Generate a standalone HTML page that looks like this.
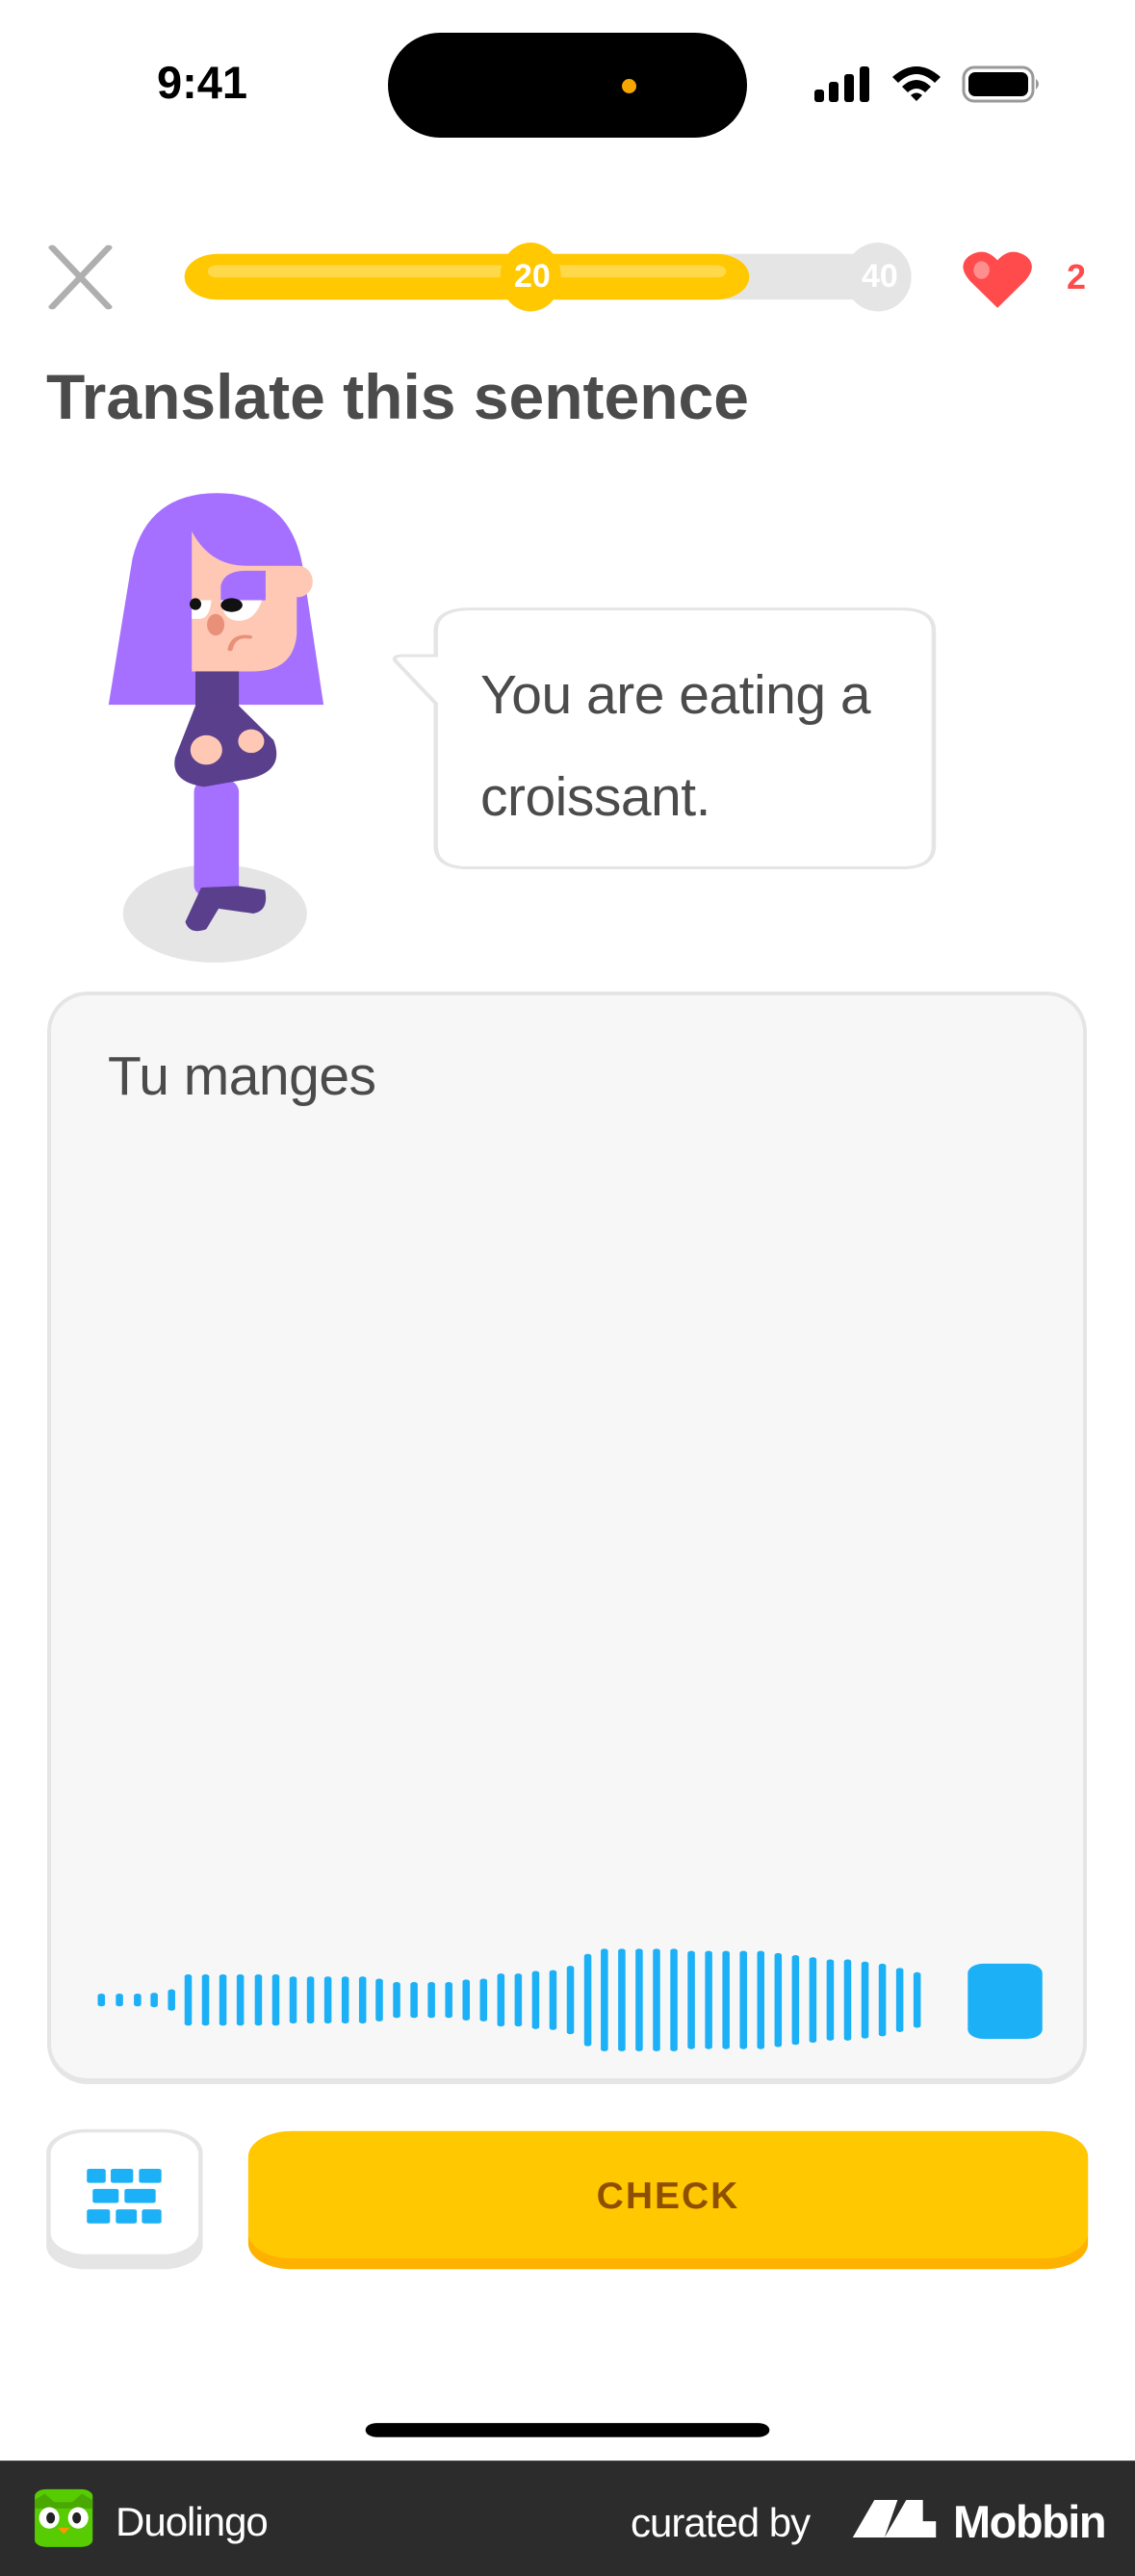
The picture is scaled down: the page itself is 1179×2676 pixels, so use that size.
<!DOCTYPE html>
<html><head><meta charset="utf-8">
<style>
html,body{margin:0;padding:0;}
body{width:1179px;height:2676px;position:relative;background:#fff;overflow:hidden;font-family:"Liberation Sans",sans-serif;}
.a{position:absolute;}
.t{white-space:nowrap;line-height:1;}
</style></head><body>

<div class="a t" style="left:163px;top:62px;font-size:47px;font-weight:bold;color:#000;">9:41</div>
<div class="a" style="left:403px;top:34px;width:373px;height:109px;border-radius:55px;background:#000;"></div>
<div class="a" style="left:646px;top:82px;width:15px;height:15px;border-radius:50%;background:#f7a600;"></div>
<svg class="a" style="left:840px;top:60px" width="250" height="55" viewBox="840 60 250 55">
 <rect x="846" y="93" width="10" height="13" rx="3"/>
 <rect x="861" y="85" width="10" height="21" rx="3"/>
 <rect x="877" y="77" width="10" height="29" rx="3"/>
 <rect x="893" y="69" width="10" height="37" rx="3"/>
 <path d="M927 80 Q952 58 977 80 L971 86 Q952 68 933 86 Z"/>
 <path d="M937 90 Q952 76 967 90 L961 96 Q952 88 943 96 Z"/>
 <path d="M946 99 Q952 94 958 99 L952 105 Z"/>
 <rect x="1001" y="70" width="72" height="35" rx="11" fill="none" stroke="#999" stroke-width="3"/>
 <rect x="1006" y="75" width="62" height="25" rx="7"/>
 <path d="M1076 82 Q1082 87 1076 93 Z" fill="#999"/>
</svg>

<svg class="a" style="left:0;top:200px" width="1179" height="800" viewBox="0 0 1568 1568" preserveAspectRatio="none">
 <line x1="72" y1="112" x2="150" y2="233" stroke="#afafaf" stroke-width="10" stroke-linecap="round"/>
 <line x1="150" y1="112" x2="72" y2="233" stroke="#afafaf" stroke-width="10" stroke-linecap="round"/>
 <rect x="255" y="125" width="990" height="93" rx="46" fill="#e5e5e5"/>
 <ellipse cx="1213" cy="172" rx="46" ry="70" fill="#e5e5e5"/>
 <rect x="255" y="125" width="780" height="93" rx="46" fill="#ffc800"/>
 <rect x="287" y="148" width="716" height="25" rx="12" fill="#ffd94a"/>
 <ellipse cx="733" cy="172" rx="42" ry="70" fill="#ffc800"/>
 <path d="M1378 235 L1340 180 Q1322 150 1338 130 Q1360 108 1378 138 Q1396 108 1418 130 Q1434 150 1416 180 Z" fill="#ff4b4b"/>
 <ellipse cx="1356" cy="158" rx="11" ry="18" fill="#ff8e8e"/>

 <ellipse cx="297" cy="1468" rx="127" ry="100" fill="#e5e5e5"/>
 <path d="M150 1043 L183 745 Q205 612 300 612 Q400 612 418 760 L447 1043 Z" fill="#a570ff"/>
 <path d="M265 690 Q290 760 340 760 L410 760 L410 900 Q405 975 350 975 L265 975 Z" fill="#ffc8b4"/>
 <ellipse cx="412" cy="792" rx="20" ry="32" fill="#ffc8b4"/>
 <path d="M305 835 L305 800 Q310 770 340 770 L367 770 L367 830 Z" fill="#a570ff"/>
 <path d="M305 830 L362 830 Q352 872 330 872 Q308 872 305 830 Z" fill="#fff"/>
 <ellipse cx="320" cy="840" rx="15" ry="14" fill="#111"/>
 <path d="M265 830 L292 830 Q290 868 275 868 L265 868 Z" fill="#fff"/>
 <ellipse cx="270" cy="838" rx="8" ry="12" fill="#111"/>
 <ellipse cx="298" cy="880" rx="12" ry="22" fill="#e8907a"/>
 <path d="M318 930 Q322 900 345 905" stroke="#e8907a" stroke-width="7" fill="none" stroke-linecap="round"/>
 <rect x="270" y="975" width="60" height="75" fill="#5a3f8c"/>
 <rect x="268" y="1190" width="62" height="250" rx="30" fill="#a570ff"/>
 <path d="M270 1045 L330 1045 L378 1115 Q395 1180 340 1195 L282 1210 Q235 1200 242 1150 Z" fill="#5a3f8c"/>
 <ellipse cx="285" cy="1135" rx="22" ry="30" fill="#ffc8b4"/>
 <ellipse cx="347" cy="1117" rx="18" ry="24" fill="#ffc8b4"/>
 <path d="M278 1415 L256 1485 Q262 1512 285 1500 L302 1458 L350 1468 Q372 1462 366 1420 L330 1412 Z" fill="#5a3f8c"/>

 <path d="M650 848 H1245 Q1290 848 1290 893 V1330 Q1290 1375 1245 1375 H647 Q602 1375 602 1330 V1040 L547 955 Q541 943 556 943 H602 V893 Q602 848 650 848 Z" fill="#fff" stroke="#e5e5e5" stroke-width="6"/>
</svg>
<div class="a t" style="left:534px;top:270px;width:34px;text-align:center;font-size:34px;font-weight:bold;color:#fff;">20</div>
<div class="a t" style="left:895px;top:270px;width:34px;text-align:center;font-size:34px;font-weight:bold;color:#fff;">40</div>
<div class="a t" style="left:1108px;top:270px;font-size:36px;font-weight:bold;color:#ff4b4b;">2</div>

<div class="a t" style="left:48px;top:379px;font-size:66px;font-weight:bold;color:#4b4b4b;">Translate this sentence</div>
<div class="a t" style="left:499px;top:694px;font-size:57px;color:#4b4b4b;letter-spacing:-0.5px;">You are eating a</div>
<div class="a t" style="left:499px;top:800px;font-size:57px;color:#4b4b4b;letter-spacing:-0.5px;">croissant.</div>

<div class="a" style="left:49px;top:1030px;width:1072px;height:1125px;background:#f7f7f7;border:4px solid #e5e5e5;border-bottom-width:6px;border-radius:42px;"></div>
<div class="a t" style="left:112px;top:1090px;font-size:57px;color:#4b4b4b;letter-spacing:-0.5px;">Tu manges</div>

<svg class="a" style="left:0;top:1980px" width="1179" height="696" viewBox="0 0 1568 1568" preserveAspectRatio="none">
 <g fill="#1cb0f6">
  <rect x="135" y="205" width="10" height="30" rx="5"/>
  <rect x="160" y="205" width="10" height="30" rx="5"/>
  <rect x="185" y="205" width="10" height="30" rx="5"/>
  <rect x="208" y="203" width="10" height="34" rx="5"/>
  <rect x="232" y="195" width="10" height="50" rx="5"/>
  <rect x="255" y="160" width="10" height="120" rx="5"/>
  <rect x="279" y="160" width="10" height="120" rx="5"/>
  <rect x="303" y="160" width="10" height="120" rx="5"/>
  <rect x="327" y="160" width="10" height="120" rx="5"/>
  <rect x="352" y="160" width="10" height="120" rx="5"/>
  <rect x="376" y="160" width="10" height="120" rx="5"/>
  <rect x="400" y="165" width="10" height="110" rx="5"/>
  <rect x="424" y="165" width="10" height="110" rx="5"/>
  <rect x="448" y="165" width="10" height="110" rx="5"/>
  <rect x="472" y="165" width="10" height="110" rx="5"/>
  <rect x="496" y="165" width="10" height="110" rx="5"/>
  <rect x="519" y="170" width="10" height="100" rx="5"/>
  <rect x="543" y="178" width="10" height="84" rx="5"/>
  <rect x="567" y="178" width="10" height="84" rx="5"/>
  <rect x="591" y="178" width="10" height="84" rx="5"/>
  <rect x="615" y="178" width="10" height="84" rx="5"/>
  <rect x="639" y="172" width="10" height="96" rx="5"/>
  <rect x="663" y="170" width="10" height="100" rx="5"/>
  <rect x="687" y="158" width="10" height="124" rx="5"/>
  <rect x="711" y="158" width="10" height="124" rx="5"/>
  <rect x="735" y="152" width="10" height="136" rx="5"/>
  <rect x="759" y="150" width="10" height="140" rx="5"/>
  <rect x="783" y="140" width="10" height="160" rx="5"/>
  <rect x="807" y="112" width="10" height="216" rx="5"/>
  <rect x="830" y="100" width="10" height="240" rx="5"/>
  <rect x="854" y="100" width="10" height="240" rx="5"/>
  <rect x="878" y="100" width="10" height="240" rx="5"/>
  <rect x="902" y="100" width="10" height="240" rx="5"/>
  <rect x="926" y="100" width="10" height="240" rx="5"/>
  <rect x="950" y="105" width="10" height="230" rx="5"/>
  <rect x="974" y="105" width="10" height="230" rx="5"/>
  <rect x="998" y="105" width="10" height="230" rx="5"/>
  <rect x="1022" y="105" width="10" height="230" rx="5"/>
  <rect x="1046" y="105" width="10" height="230" rx="5"/>
  <rect x="1070" y="110" width="10" height="220" rx="5"/>
  <rect x="1094" y="115" width="10" height="210" rx="5"/>
  <rect x="1118" y="120" width="10" height="200" rx="5"/>
  <rect x="1142" y="125" width="10" height="190" rx="5"/>
  <rect x="1166" y="125" width="10" height="190" rx="5"/>
  <rect x="1190" y="130" width="10" height="180" rx="5"/>
  <rect x="1214" y="135" width="10" height="170" rx="5"/>
  <rect x="1238" y="145" width="10" height="150" rx="5"/>
  <rect x="1262" y="155" width="10" height="130" rx="5"/>
  <rect x="1337" y="135" width="103" height="176" rx="22"/>
 </g>
 <rect x="64" y="522" width="216" height="328" rx="55" fill="#e5e5e5"/>
 <rect x="70" y="530" width="204" height="285" rx="50" fill="#fff"/>
 <g fill="#1cb0f6">
  <rect x="120" y="615" width="26" height="33" rx="4"/><rect x="153" y="615" width="31" height="33" rx="4"/><rect x="192" y="615" width="31" height="33" rx="4"/>
  <rect x="128" y="662" width="36" height="33" rx="4"/><rect x="172" y="662" width="43" height="33" rx="4"/>
  <rect x="120" y="710" width="32" height="33" rx="4"/><rect x="160" y="710" width="29" height="33" rx="4"/><rect x="196" y="710" width="27" height="33" rx="4"/>
 </g>
 <rect x="343" y="527" width="1160" height="323" rx="60" fill="#ffb100"/>
 <rect x="343" y="527" width="1160" height="298" rx="60" fill="#ffc800"/>
 <rect x="505" y="1210" width="558" height="33" rx="16" fill="#000"/>
 <rect x="0" y="1298" width="1568" height="270" fill="#2c2c2c"/>
 <rect x="48" y="1365" width="80" height="135" rx="16" fill="#58cc02"/>
 <path d="M48 1390 L62 1375 L75 1395 L100 1395 L113 1375 L128 1390 L128 1410 L48 1410 Z" fill="#4aa802"/>
 <ellipse cx="68" cy="1432" rx="14" ry="25" fill="#fff"/><ellipse cx="108" cy="1432" rx="14" ry="25" fill="#fff"/>
 <ellipse cx="70" cy="1432" rx="6" ry="13" fill="#222"/><ellipse cx="106" cy="1432" rx="6" ry="13" fill="#222"/>
 <path d="M80 1455 L96 1455 L88 1470 Z" fill="#ff9600"/>
 <path d="M1178 1478 L1208 1390 L1240 1390 L1222 1478 Z M1222 1478 L1252 1390 L1275 1390 L1275 1478 Z M1246 1440 L1293 1440 L1293 1478 L1246 1478 Z" fill="#fff"/>
</svg>
<div class="a t" style="left:258px;top:2262px;width:872px;text-align:center;font-size:39px;font-weight:bold;color:#8f4f00;letter-spacing:2px;">CHECK</div>
<div class="a t" style="left:120px;top:2599px;font-size:42px;color:#fff;letter-spacing:-1px;">Duolingo</div>
<div class="a t" style="left:655px;top:2600px;font-size:42px;color:#fff;letter-spacing:-1px;">curated by</div>
<div class="a t" style="left:990px;top:2596px;font-size:47px;font-weight:bold;color:#fff;letter-spacing:-1.5px;">Mobbin</div>

</body></html>
